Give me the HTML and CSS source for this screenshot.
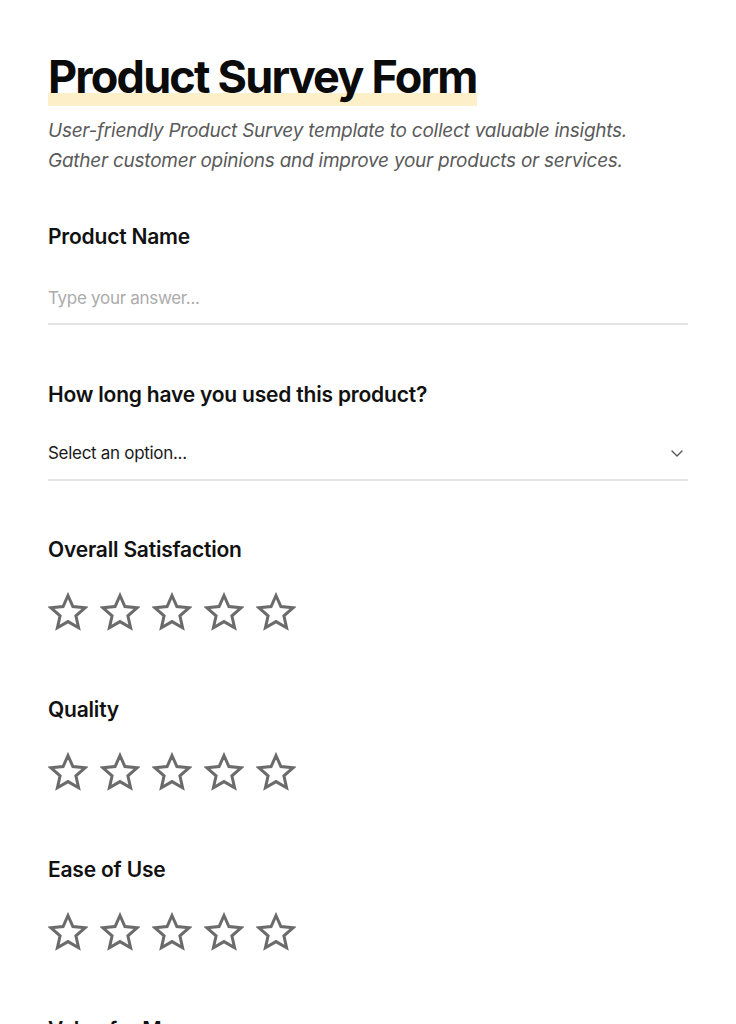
FILE: index.html
```html
<!DOCTYPE html>
<html lang="en">
<head>
<meta charset="utf-8">
<title>Product Survey Form</title>
<link rel="stylesheet" href="styles.css">
</head>
<body>
<svg width="0" height="0" class="defs" aria-hidden="true">
  <defs>
    <path id="star" d="M20 3.5 L24.9 14.6 L37 15.8 L27.9 23.9 L30.6 35.8 L20 29.6 L9.4 35.8 L12.1 23.9 L3 15.8 L15.1 14.6 Z"/>
  </defs>
</svg>
<main class="form">
  <header class="intro">
    <h1 class="title"><span class="title-mark">Product Survey Form</span></h1>
    <p class="subtitle">User-friendly Product Survey template to collect valuable insights. Gather customer opinions and improve your products or services.</p>
  </header>

  <section class="question">
    <label class="label" for="pname">Product Name</label>
    <input class="field" id="pname" type="text" placeholder="Type your answer...">
  </section>

  <section class="question question-select">
    <div class="label">How long have you used this product?</div>
    <div class="field select">
      <span>Select an option...</span>
      <svg class="chev" width="14" height="14" viewBox="0 0 14 14"><path d="M2 5 L7 10 L12 5" fill="none" stroke="#555" stroke-width="1.4" stroke-linecap="round" stroke-linejoin="round"/></svg>
    </div>
  </section>

  <section class="question rating-q">
    <div class="label">Overall Satisfaction</div>
    <div class="stars">
      <svg class="star" viewBox="0 0 40 40"><use href="#star"/></svg>
      <svg class="star" viewBox="0 0 40 40"><use href="#star"/></svg>
      <svg class="star" viewBox="0 0 40 40"><use href="#star"/></svg>
      <svg class="star" viewBox="0 0 40 40"><use href="#star"/></svg>
      <svg class="star" viewBox="0 0 40 40"><use href="#star"/></svg>
    </div>
  </section>

  <section class="question rating-q">
    <div class="label">Quality</div>
    <div class="stars">
      <svg class="star" viewBox="0 0 40 40"><use href="#star"/></svg>
      <svg class="star" viewBox="0 0 40 40"><use href="#star"/></svg>
      <svg class="star" viewBox="0 0 40 40"><use href="#star"/></svg>
      <svg class="star" viewBox="0 0 40 40"><use href="#star"/></svg>
      <svg class="star" viewBox="0 0 40 40"><use href="#star"/></svg>
    </div>
  </section>

  <section class="question rating-q">
    <div class="label">Ease of Use</div>
    <div class="stars">
      <svg class="star" viewBox="0 0 40 40"><use href="#star"/></svg>
      <svg class="star" viewBox="0 0 40 40"><use href="#star"/></svg>
      <svg class="star" viewBox="0 0 40 40"><use href="#star"/></svg>
      <svg class="star" viewBox="0 0 40 40"><use href="#star"/></svg>
      <svg class="star" viewBox="0 0 40 40"><use href="#star"/></svg>
    </div>
  </section>

  <section class="question rating-q">
    <div class="label">Value for Money</div>
    <div class="stars">
      <svg class="star" viewBox="0 0 40 40"><use href="#star"/></svg>
      <svg class="star" viewBox="0 0 40 40"><use href="#star"/></svg>
      <svg class="star" viewBox="0 0 40 40"><use href="#star"/></svg>
      <svg class="star" viewBox="0 0 40 40"><use href="#star"/></svg>
      <svg class="star" viewBox="0 0 40 40"><use href="#star"/></svg>
    </div>
  </section>
</main>
</body>
</html>
```

FILE: styles.css
```css
html, body {
  margin: 0;
  padding: 0;
  background: #ffffff;
}

body {
  font-family: "Inter", "Noto Sans", "Liberation Sans", sans-serif;
  color: #111111;
}

.defs {
  position: absolute;
  width: 0;
  height: 0;
  overflow: hidden;
}

.form {
  padding: 50px 48px 48px;
  display: flex;
  flex-direction: column;
}

.intro {
  margin-bottom: 46px;
}

.title {
  margin: 0;
  font-size: 45px;
  line-height: 54px;
  font-weight: 700;
  letter-spacing: -1.8px;
  color: #0b0b0b;
}

.title-mark {
  background: linear-gradient(to bottom, transparent 0, transparent 78%, #fdefc8 78%, #fdefc8 100%);
  padding-bottom: 2px;
}

.subtitle {
  margin: 12px 0 0;
  font-size: 19px;
  line-height: 30px;
  font-style: italic;
  font-weight: 400;
  color: #5a5a5a;
  max-width: 600px;
  letter-spacing: -0.25px;
}

.question {
  display: flex;
  flex-direction: column;
  margin-bottom: 55px;
}

.question-select {
  margin-bottom: 54px;
}

.label {
  font-size: 21px;
  line-height: 30px;
  font-weight: 600;
  letter-spacing: -0.2px;
  color: #111111;
  margin-bottom: 16px;
}

.field {
  box-sizing: border-box;
  width: 100%;
  height: 57px;
  border: 0;
  border-bottom: 2px solid #e4e4e4;
  padding: 4px 0 0;
  font-family: inherit;
  font-size: 17px;
  letter-spacing: -0.3px;
  color: #1a1a1a;
  background: transparent;
  outline: none;
}

.field::placeholder {
  color: #ababab;
}

.select {
  display: flex;
  align-items: center;
  justify-content: space-between;
  height: 55px;
  padding-top: 1px;
}

.chev {
  margin-right: 4px;
}

.rating-q .label {
  margin-bottom: 27px;
}

.rating-q {
  margin-bottom: 63px;
}

.stars {
  display: flex;
  gap: 12px;
}

.star {
  width: 40px;
  height: 40px;
  display: block;
  fill: none;
  stroke: #6b6b6b;
  stroke-width: 3;
  stroke-linejoin: miter;
}
```
